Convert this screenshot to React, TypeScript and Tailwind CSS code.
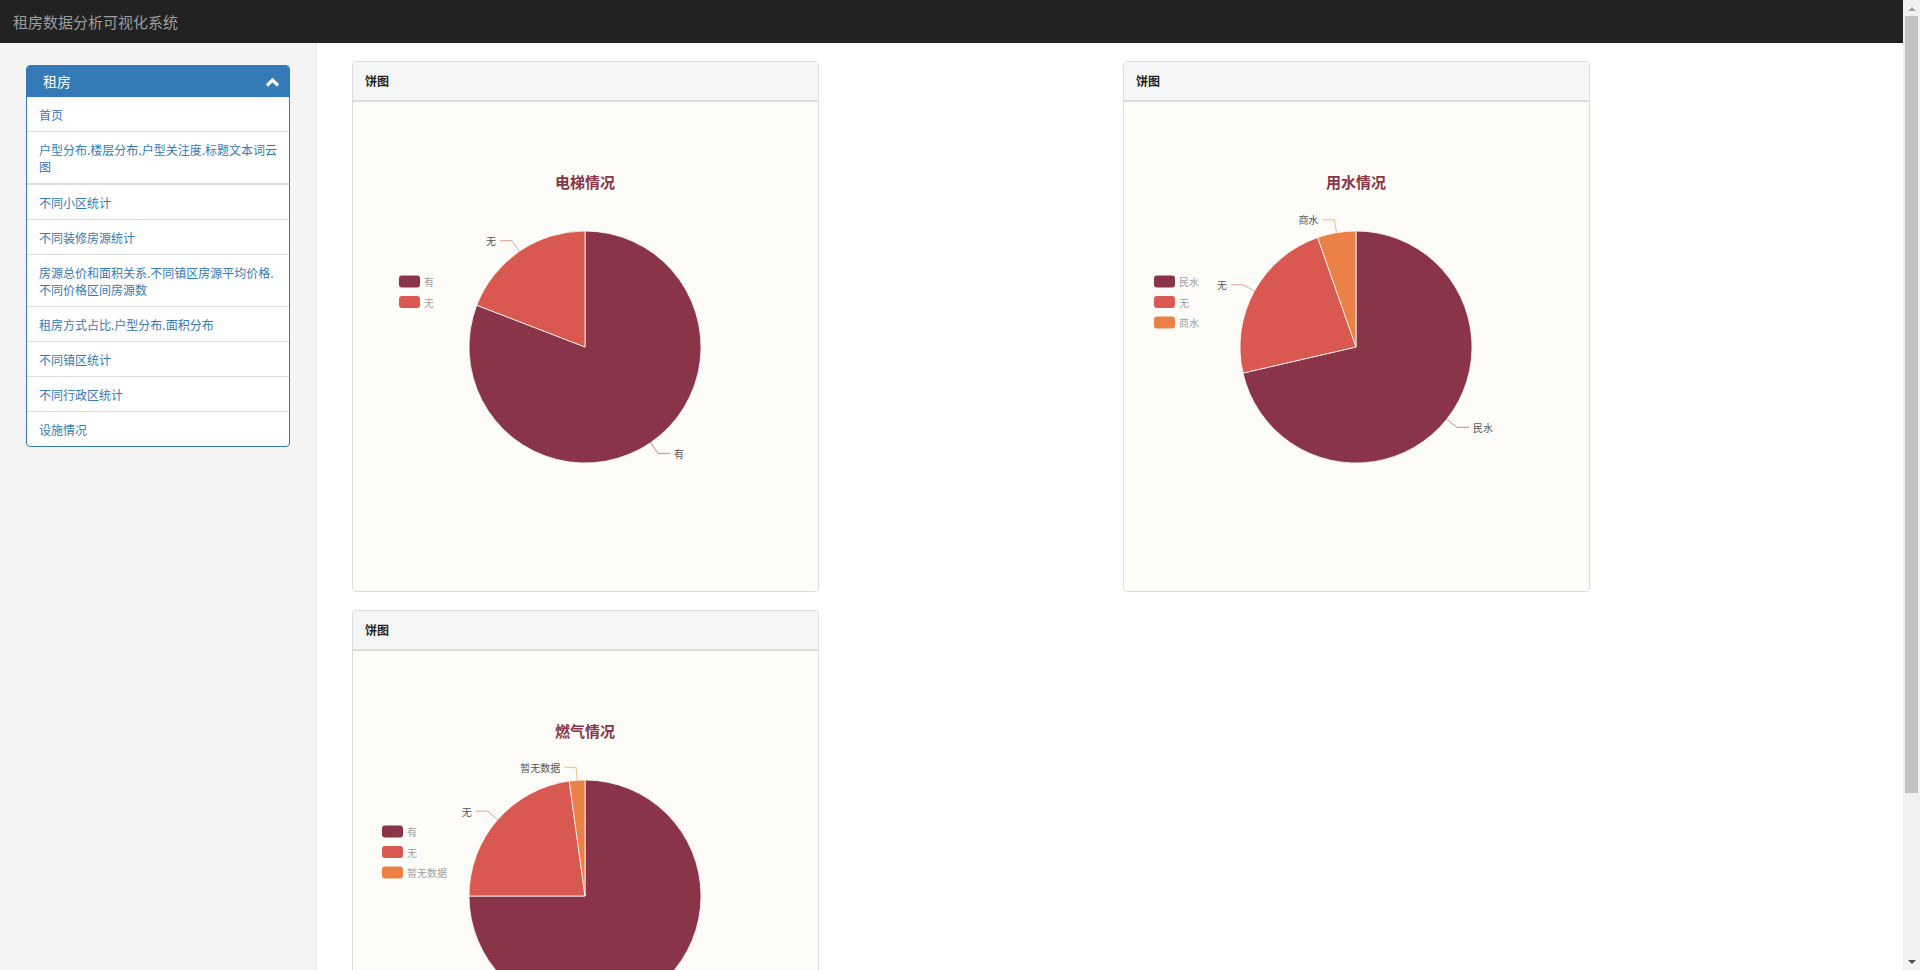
import React from "react";

type Slice = { name: string; value: number; color: string };

const FONT = "'Noto Sans CJK SC', 'Noto Sans', sans-serif";

const C1 = "#893448";
const C2 = "#d95850";
const C3 = "#eb8146";

function PieChart({
  title,
  slices,
  legendX,
  legendY,
}: {
  title: string;
  slices: Slice[];
  legendX: number;
  legendY: number;
}) {
  const W = 465;
  const H = 489;
  const cx = 232;
  const cy = 245;
  const r = 116;
  const total = slices.reduce((a, s) => a + s.value, 0);
  let acc = 0;
  const pt = (a: number, rad: number): [number, number] => [
    cx + rad * Math.sin(a),
    cy - rad * Math.cos(a),
  ];
  const parts = slices.map((s) => {
    const a0 = (acc / total) * Math.PI * 2;
    acc += s.value;
    const a1 = (acc / total) * Math.PI * 2;
    const [x0, y0] = pt(a0, r);
    const [x1, y1] = pt(a1, r);
    const large = a1 - a0 > Math.PI ? 1 : 0;
    const d = `M ${cx} ${cy} L ${x0} ${y0} A ${r} ${r} 0 ${large} 1 ${x1} ${y1} Z`;
    const mid = (a0 + a1) / 2;
    const [ex, ey] = pt(mid, r);
    const [lx, ly] = pt(mid, r + 13);
    const dir = Math.sin(mid) >= 0 ? 1 : -1;
    const hx = lx + dir * 12;
    return { s, d, ex, ey, lx, ly, hx, dir };
  });
  return (
    <svg width={W} height={H} viewBox={`0 0 ${W} ${H}`} className="block">
      <text
        x={cx}
        y={79}
        textAnchor="middle"
        dominantBaseline="central"
        fontFamily={FONT}
        fontSize={15}
        fontWeight={700}
        fill={C1}
      >
        {title}
      </text>
      {parts.map((p, i) => (
        <path key={i} d={p.d} fill={p.s.color} stroke="#fdfcf8" strokeWidth={0.8} strokeLinejoin="round" />
      ))}
      {parts.map((p, i) => (
        <g key={"l" + i}>
          <polyline
            points={`${p.ex},${p.ey} ${p.lx},${p.ly} ${p.hx},${p.ly}`}
            fill="none"
            stroke={p.s.color}
            strokeOpacity={0.55}
            strokeWidth={1}
          />
          <text
            x={p.hx + p.dir * 4}
            y={p.ly}
            textAnchor={p.dir > 0 ? "start" : "end"}
            dominantBaseline="central"
            fontFamily={FONT}
            fontSize={10}
            fill="#555"
          >
            {p.s.name}
          </text>
        </g>
      ))}
      {slices.map((s, i) => {
        const y = legendY + i * 20.5;
        return (
          <g key={"g" + i}>
            <rect x={legendX} y={y - 6} width={21} height={12} rx={3} fill={s.color} />
            <text
              x={legendX + 25}
              y={y}
              dominantBaseline="central"
              fontFamily={FONT}
              fontSize={10}
              fill="#a0a0a0"
            >
              {s.name}
            </text>
          </g>
        );
      })}
    </svg>
  );
}

function Card({ children }: { children: React.ReactNode }) {
  return (
    <div className="w-[467px] border border-[#dddddd] rounded-[4px] overflow-hidden">
      <div className="h-[40px] bg-[#f5f6f6] border-b-2 border-[#dddddd] flex items-center pl-[12px] text-[12px] font-semibold text-[#222]">
        饼图
      </div>
      <div className="h-[489px] bg-[#fdfcf8]">{children}</div>
    </div>
  );
}

const navItems: { text: React.ReactNode; thick?: boolean }[] = [
  { text: "首页" },
  {
    text: (
      <>
        户型分布.楼层分布.户型关注度.标题文本词云
        <br />图
      </>
    ),
    thick: true,
  },
  { text: "不同小区统计" },
  { text: "不同装修房源统计" },
  {
    text: (
      <>
        房源总价和面积关系.不同镇区房源平均价格.
        <br />
        不同价格区间房源数
      </>
    ),
  },
  { text: "租房方式占比.户型分布.面积分布" },
  { text: "不同镇区统计" },
  { text: "不同行政区统计" },
  { text: "设施情况" },
];

function ScrollStrip() {
  return (
    <div className="w-[17px] h-[970px] shrink-0 bg-[#f1f1f1] flex flex-col items-center">
      <div className="h-[16px] flex items-center justify-center">
        <svg width="8" height="5" viewBox="0 0 8 5">
          <polygon points="0,5 4,1 8,5" fill="#a3a3a3" />
        </svg>
      </div>
      <div className="w-[13px] h-[777px] bg-[#c1c1c1]" />
      <div className="flex-1" />
      <div className="h-[16px] flex items-center justify-center">
        <svg width="8" height="5" viewBox="0 0 8 5">
          <polygon points="0,0 8,0 4,4" fill="#505050" />
        </svg>
      </div>
    </div>
  );
}

export default function App() {
  return (
    <div className="flex items-start bg-white" style={{ fontFamily: FONT }}>
      <div className="flex-1 min-w-0 min-h-[1200px] flex flex-col bg-white">
        <nav className="h-[43px] bg-[#222222] flex items-center pl-[13px] shrink-0">
          <span className="text-[15px] text-[#9d9d9d] leading-none">租房数据分析可视化系统</span>
        </nav>
        <div className="flex flex-1">
          <aside className="w-[317px] shrink-0 bg-[#f4f4f4] border-r border-[#ececec] pt-[22px] px-[26px]">
            <div className="border border-[#337ab7] rounded-[4px] overflow-hidden bg-white">
              <div className="h-[31px] bg-[#337ab7] flex items-center justify-between pl-[16px] pr-[9px]">
                <span className="text-white text-[14px]">租房</span>
                <svg width="15" height="10" viewBox="0 0 15 10">
                  <polyline
                    points="2,8.5 7.5,3 13,8.5"
                    fill="none"
                    stroke="#ffffff"
                    strokeWidth="3.2"
                    strokeLinecap="butt"
                    strokeLinejoin="miter"
                  />
                </svg>
              </div>
              <ul>
                {navItems.map((it, i) => (
                  <li
                    key={i}
                    className={
                      "pl-[12px] pr-[6px] pt-[9px] pb-[8px] text-[12px] leading-[17px] text-[#337ab7] " +
                      (i === navItems.length - 1
                        ? ""
                        : it.thick
                        ? "border-b-2 border-[#dddddd]"
                        : "border-b border-[#dddddd]")
                    }
                  >
                    {it.text}
                  </li>
                ))}
              </ul>
            </div>
          </aside>
          <main className="flex-1 pt-[18px] pl-[35px]">
            <div className="grid grid-cols-[771px_771px] gap-y-[18px] items-start">
              <Card>
                <PieChart
                  title="电梯情况"
                  legendX={46}
                  legendY={179.5}
                  slices={[
                    { name: "有", value: 80.86, color: C1 },
                    { name: "无", value: 19.14, color: C2 },
                  ]}
                />
              </Card>
              <Card>
                <PieChart
                  title="用水情况"
                  legendX={30}
                  legendY={179.5}
                  slices={[
                    { name: "民水", value: 71.39, color: C1 },
                    { name: "无", value: 23.25, color: C2 },
                    { name: "商水", value: 5.36, color: C3 },
                  ]}
                />
              </Card>
              <Card>
                <PieChart
                  title="燃气情况"
                  legendX={29}
                  legendY={180.5}
                  slices={[
                    { name: "有", value: 75, color: C1 },
                    { name: "无", value: 22.83, color: C2 },
                    { name: "暂无数据", value: 2.17, color: C3 },
                  ]}
                />
              </Card>
            </div>
          </main>
        </div>
      </div>
      <ScrollStrip />
    </div>
  );
}
